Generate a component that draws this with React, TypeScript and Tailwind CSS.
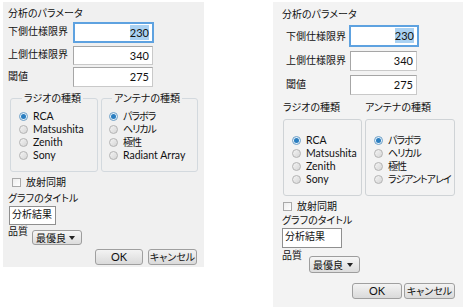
import React from "react";

const FONT = { fontFamily: '"Lato", "Noto Sans CJK JP", sans-serif' };

const Radio = ({ checked, label, latin }: { checked?: boolean; label: string; latin?: boolean }) => (
  <div className="flex items-center h-[13px] gap-[5px] whitespace-nowrap">
    <span
      className={`w-[9px] h-[9px] rounded-full border flex items-center justify-center flex-shrink-0 ${
        checked ? "border-[#6e9fc6] bg-[#e6f1fa]" : "border-[#b3b3b3] bg-gradient-to-br from-[#f4f4f4] to-[#d6d6d6]"
      }`}
    >
      {checked && <span className="w-[5px] h-[5px] rounded-full bg-[#2a7ec0]" />}
    </span>
    <span className={`leading-[13px] ${latin ? "text-[10.5px]" : "text-[10px] tracking-[-1px]"}`}>{label}</span>
  </div>
);

const Checkbox = ({ label }: { label: string }) => (
  <div className="flex items-center h-[14px] gap-[5px]">
    <span className="w-[9px] h-[9px] border border-[#a9a9a9] bg-gradient-to-br from-[#ededed] to-[#ffffff]" />
    <span className="leading-[14px]">{label}</span>
  </div>
);

const NumInput = ({
  value,
  focused,
  className,
}: {
  value: string;
  focused?: boolean;
  className: string;
}) => (
  <div
    className={`bg-white flex items-start justify-end pr-[3px] pt-[1px] ${
      focused ? "border-2 border-[#5ea2e0]" : "border border-[#a6a6a6] border-b-[#c9c9c9] border-r-[#c9c9c9]"
    } ${className}`}
  >
    <span className={`text-[11px] leading-[15px] ${focused ? "bg-[#a9d1f2]" : ""}`}>{value}</span>
  </div>
);

const Dropdown = ({ className }: { className: string }) => (
  <div
    className={`flex items-center justify-between pl-[3px] pr-[6px] border border-[#9d9d9d] rounded-[3px] bg-gradient-to-b from-[#f6f6f6] to-[#dcdcdc] ${className}`}
  >
    <span className="leading-[14px]">最優良</span>
    <span className="w-0 h-0 border-l-[3px] border-r-[3px] border-t-[4px] border-l-transparent border-r-transparent border-t-[#222]" />
  </div>
);

const Btn = ({ label, className }: { label: string; className: string }) => (
  <div
    className={`flex items-center justify-center whitespace-nowrap border border-[#9f9f9f] rounded-[3px] bg-gradient-to-b from-[#f3f3f3] to-[#dadada] ${className}`}
  >
    <span className="leading-[14px]">{label}</span>
  </div>
);

const LeftDialog = () => (
  <div className="mt-[2px] ml-[3px] w-[201px] h-[265px] bg-[#f0f0f0] pl-[5px] pt-[4px] flex flex-col">
    <div className="leading-[14px]">分析のパラメータ</div>
    <div className="mt-[2px] flex items-center">
      <span className="w-[65px] leading-[14px] -mt-[3px]">下側仕様限界</span>
      <NumInput value="230" focused className="w-[81px] h-[21px]" />
    </div>
    <div className="mt-[3px] flex items-center">
      <span className="w-[65px] leading-[14px] -mt-[3px]">上側仕様限界</span>
      <NumInput value="340" className="w-[80px] h-[19px]" />
    </div>
    <div className="mt-[2px] flex items-center">
      <span className="w-[65px] leading-[14px] -mt-[2px]">閾値</span>
      <NumInput value="275" className="w-[80px] h-[20px]" />
    </div>
    <div className="mt-[4px] ml-[2px] flex gap-[3px]">
      <fieldset className="w-[88px] h-[81px] border border-[#d3d9de] rounded-[3px] pl-[8px] pt-[5px]">
        <legend className="ml-[3px] px-[2px] leading-[14px]">ラジオの種類</legend>
        <Radio checked label="RCA" latin />
        <Radio label="Matsushita" latin />
        <Radio label="Zenith" latin />
        <Radio label="Sony" latin />
      </fieldset>
      <fieldset className="w-[97px] h-[81px] border border-[#d3d9de] rounded-[3px] pl-[7px] pt-[5px]">
        <legend className="ml-[3px] px-[2px] leading-[14px]">アンテナの種類</legend>
        <Radio checked label="パラボラ" />
        <Radio label="ヘリカル" />
        <Radio label="極性" />
        <Radio label="Radiant Array" latin />
      </fieldset>
    </div>
    <div className="mt-[3px] ml-[4px]">
      <Checkbox label="放射同期" />
    </div>
    <div className="mt-[2px] leading-[14px]">グラフのタイトル</div>
    <div className="mt-[1px] ml-[1px] w-[47px] h-[19px] bg-white border border-[#8f8f8f] pl-[2px] leading-[15px]">
      分析結果
    </div>
    <div className="flex items-start">
      <span className="leading-[12px] w-[24px]">品質</span>
      <Dropdown className="mt-[5px] w-[50px] h-[15px]" />
    </div>
    <div className="mt-[4px] pr-[7px] flex justify-end gap-[5px]">
      <Btn label="OK" className="w-[48px] h-[16px] text-[11px]" />
      <Btn label="キャンセル" className="w-[49px] h-[16px]" />
    </div>
  </div>
);

const RightDialog = () => (
  <div className="mt-[2px] w-[190px] h-[305px] bg-[#f3f3f3] pl-[9px] pt-[5px] flex flex-col">
    <div className="leading-[14px]">分析のパラメータ</div>
    <div className="mt-[4px] flex items-center">
      <span className="w-[67px] pl-[4px] leading-[14px]">下側仕様限界</span>
      <NumInput value="230" focused className="w-[70px] h-[22px]" />
    </div>
    <div className="mt-[4px] flex items-center">
      <span className="w-[68px] pl-[4px] leading-[14px] -mt-[2px]">上側仕様限界</span>
      <NumInput value="340" className="w-[67px] h-[20px]" />
    </div>
    <div className="mt-[4px] flex items-center">
      <span className="w-[68px] pl-[4px] leading-[14px] -mt-[2px]">閾値</span>
      <NumInput value="275" className="w-[67px] h-[20px]" />
    </div>
    <div className="mt-[5px] ml-[1px] flex leading-[14px]">
      <span className="w-[82px]">ラジオの種類</span>
      <span>アンテナの種類</span>
    </div>
    <div className="mt-[5px] ml-[1px] flex gap-[3px]">
      <div className="w-[79px] h-[77px] border border-[#cfd3d6] rounded-[3px] pl-[8px] pt-[14px]">
        <Radio checked label="RCA" latin />
        <Radio label="Matsushita" latin />
        <Radio label="Zenith" latin />
        <Radio label="Sony" latin />
      </div>
      <div className="w-[90px] h-[77px] border border-[#cfd3d6] rounded-[3px] pl-[8px] pt-[14px]">
        <Radio checked label="パラボラ" />
        <Radio label="ヘリカル" />
        <Radio label="極性" />
        <Radio label="ラジアントアレイ" />
      </div>
    </div>
    <div className="mt-[3px] ml-[1px]">
      <Checkbox label="放射同期" />
    </div>
    <div className="leading-[14px]">グラフのタイトル</div>
    <div className="mt-[1px] w-[60px] h-[20px] bg-white border border-[#8f8f8f] pl-[2px] leading-[15px]">
      分析結果
    </div>
    <div className="flex items-start">
      <span className="leading-[14px] w-[27px]">品質</span>
      <Dropdown className="mt-[8px] w-[51px] h-[17px]" />
    </div>
    <div className="mt-[10px] pr-[8px] flex justify-end gap-[2px]">
      <Btn label="OK" className="w-[50px] h-[16px] text-[11px]" />
      <Btn label="キャンセル" className="w-[51px] h-[16px]" />
    </div>
  </div>
);

export default function App() {
  return (
    <div
      className="w-[465px] h-[307px] bg-white flex text-[10px] text-[#111] [font-feature-settings:'palt']"
      style={FONT}
    >
      <LeftDialog />
      <div className="w-[69px]" />
      <RightDialog />
    </div>
  );
}
